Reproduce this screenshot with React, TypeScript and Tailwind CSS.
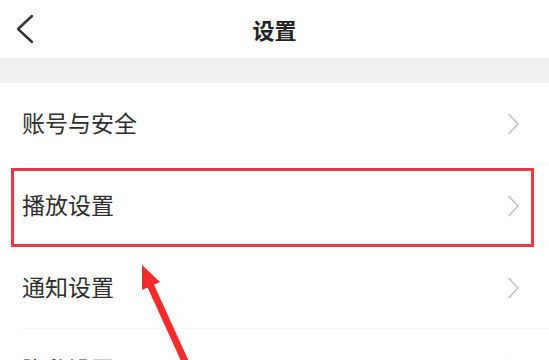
import React from "react";

const font = { fontFamily: '"Noto Sans CJK SC", "Noto Sans", sans-serif' };

function Chevron() {
  return (
    <svg width="13" height="22" viewBox="0 0 13 22" className="shrink-0">
      <polyline points="2,1.5 11,11 2,20.5" fill="none" stroke="#c4c4c6" strokeWidth="1.8" strokeLinecap="round" strokeLinejoin="round" />
    </svg>
  );
}

function Row({ label, last }: { label: string; last?: boolean }) {
  return (
    <div className="pl-[22px]">
      <div className={`flex h-[82px] items-center justify-between pr-[29px] ${last ? "" : "border-b border-[#f5f5f6]"}`}>
        <span className="text-[23px] leading-none text-[#2d2d2d] -mt-[3px]">{label}</span>
        <Chevron />
      </div>
    </div>
  );
}

export default function App() {
  return (
    <div className="relative h-[360px] w-[549px] overflow-hidden bg-white" style={font}>
      <div className="grid h-[58px] grid-cols-[1fr_auto_1fr] items-center">
        <div className="pl-[16px]">
          <svg width="18" height="30" viewBox="0 0 18 30">
            <polyline points="16,2 2,15 16,28" fill="none" stroke="#333333" strokeWidth="2.4" strokeLinecap="round" strokeLinejoin="round" />
          </svg>
        </div>
        <div className="text-[22px] font-bold text-[#222] leading-none">设置</div>
        <div />
      </div>
      <div className="h-[25px] bg-[#f0f0f2]" />
      <Row label="账号与安全" />
      <Row label="播放设置" />
      <Row label="通知设置" />
      <Row label="隐私设置" last />

      <div className="absolute left-[11px] top-[168px] h-[79px] w-[523px] border-[3px] border-[#e53a40]" />

      <svg className="absolute left-0 top-0" width="549" height="360" viewBox="0 0 549 360">
        <line x1="148" y1="280" x2="189" y2="370" stroke="#f22b2b" strokeWidth="7" />
        <polygon points="142,265 160,282 142,290" fill="#f22b2b" />
      </svg>
    </div>
  );
}
